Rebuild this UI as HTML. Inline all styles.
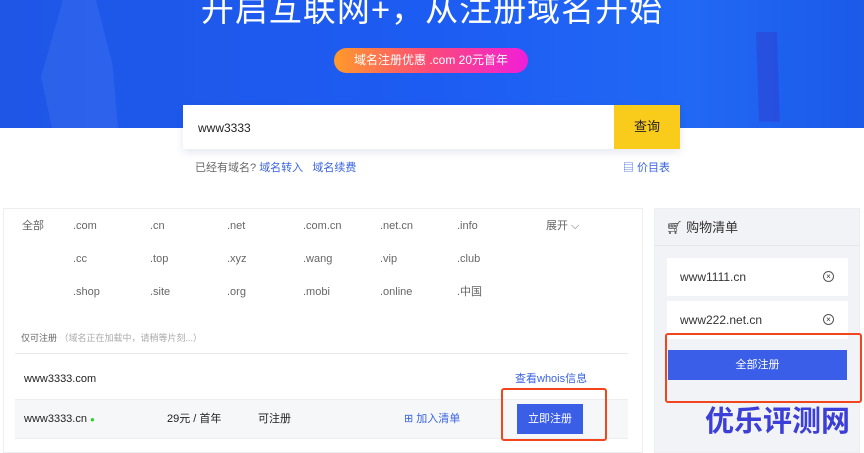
<!DOCTYPE html>
<html><head><meta charset="utf-8"><style>
*{margin:0;padding:0;box-sizing:border-box}
body{width:864px;height:449px;overflow:hidden;background:#fff;font-family:"Liberation Sans","Noto Sans CJK SC",sans-serif;position:relative;font-size:11px;color:#333}
.a{position:absolute;line-height:14px}
.ban{left:0;top:0;width:864px;height:128px;background:linear-gradient(90deg,#1f56e6 0%,#1d5cf2 50%,#2168f5 80%,#1c5ae8 100%)}
.t{left:0;width:864px;top:-10px;text-align:center;color:#fff;font-size:33px;line-height:40px;letter-spacing:1px}
.pill{left:334px;top:48px;width:194px;height:25px;border-radius:13px;background:linear-gradient(90deg,#ff9a2a,#fb4a7a 50%,#f01fd8);color:#fff;font-size:12px;text-align:center;line-height:25px}
.sb{left:183px;top:105px;width:497px;height:44px;background:#fff;box-shadow:0 3px 8px rgba(40,60,120,.12)}
.btn{left:614px;top:105px;width:66px;height:44px;background:#f9cb1a;font-size:13px;text-align:center;line-height:44px;color:#222}
.blue{color:#3a63e0}
.lp{left:3px;top:208px;width:640px;height:245px;border:1px solid #eceef2}
.rp{left:654px;top:208px;width:206px;height:245px;background:#f2f3f6;border:1px solid #eceef2}
.item{background:#fff;width:181px;height:38px;left:667px;font-size:12px;line-height:38px;padding-left:13px;color:#333}
.x{position:absolute;right:14px;top:13px;width:11px;height:11px;border:1px solid #555;border-radius:50%;font-size:8px;line-height:9px;text-align:center}
.tld{font-size:11px;color:#666}
.red{border:2px solid #f2441d;border-radius:3px}
</style></head><body>
<div class="a ban"></div>
<div class="a" style="left:30px;top:0;width:110px;height:128px;background:rgba(120,160,255,.15);clip-path:polygon(30% 0,60% 0,75% 50%,80% 100%,20% 100%,10% 60%)"></div>
<div class="a" style="left:735px;top:0;width:60px;height:128px;background:rgba(60,40,190,.3);clip-path:polygon(35% 25%,70% 25%,75% 95%,40% 95%)"></div>
<div class="a t">开启互联网+，从注册域名开始</div>
<div class="a pill">域名注册优惠 .com 20元首年</div>
<div class="a sb"></div>
<div class="a" style="left:198px;top:121px;font-size:12px;color:#222">www3333</div>
<div class="a btn">查询</div>
<div class="a" style="left:195px;top:161px;font-size:11px;color:#666">已经有域名? <span class="blue">域名转入</span>&nbsp;&nbsp; <span class="blue">域名续费</span></div>
<div class="a blue" style="left:623px;top:161px;font-size:11px">▤ 价目表</div>
<div class="a lp"></div>
<div class="a tld" style="left:22px;top:219px">全部</div>
<div class="a tld" style="left:73px;top:219px">.com</div><div class="a tld" style="left:150px;top:219px">.cn</div><div class="a tld" style="left:227px;top:219px">.net</div><div class="a tld" style="left:303px;top:219px">.com.cn</div><div class="a tld" style="left:380px;top:219px">.net.cn</div><div class="a tld" style="left:457px;top:219px">.info</div><div class="a tld" style="left:546px;top:219px">展开 ⌵</div>
<div class="a tld" style="left:73px;top:252px">.cc</div><div class="a tld" style="left:150px;top:252px">.top</div><div class="a tld" style="left:227px;top:252px">.xyz</div><div class="a tld" style="left:303px;top:252px">.wang</div><div class="a tld" style="left:380px;top:252px">.vip</div><div class="a tld" style="left:457px;top:252px">.club</div>
<div class="a tld" style="left:73px;top:285px">.shop</div><div class="a tld" style="left:150px;top:285px">.site</div><div class="a tld" style="left:227px;top:285px">.org</div><div class="a tld" style="left:303px;top:285px">.mobi</div><div class="a tld" style="left:380px;top:285px">.online</div><div class="a tld" style="left:457px;top:285px">.中国</div>
<div class="a" style="left:21px;top:331px;font-size:9px;color:#666">仅可注册 <span style="color:#aaa">（域名正在加载中，请稍等片刻...）</span></div>
<div class="a" style="left:15px;top:353px;width:613px;height:1px;background:#e8e9ed"></div>
<div class="a" style="left:24px;top:372px;font-size:11px;color:#222">www3333.com</div>
<div class="a blue" style="left:515px;top:372px;font-size:11px">查看whois信息</div>
<div class="a" style="left:15px;top:399px;width:613px;height:40px;background:#f6f7f9;border-top:1px solid #eceef2;border-bottom:1px solid #eceef2"></div>
<div class="a" style="left:24px;top:412px;font-size:11px;color:#222">www3333.cn <span style="color:#3c3;font-size:8px">●</span></div>
<div class="a" style="left:167px;top:412px;font-size:11px;color:#222">29元 / 首年</div>
<div class="a" style="left:258px;top:412px;font-size:11px;color:#222">可注册</div>
<div class="a blue" style="left:404px;top:412px;font-size:11px">⊞ 加入清单</div>
<div class="a" style="left:517px;top:404px;width:66px;height:30px;background:#3b5ee6;color:#fff;font-size:11px;text-align:center;line-height:30px">立即注册</div>
<div class="a red" style="left:501px;top:388px;width:106px;height:53px"></div>
<div class="a rp"></div>
<div class="a" style="left:655px;top:245px;width:204px;height:1px;background:#e4e6ea"></div>
<div class="a" style="left:666px;top:220px;font-size:13px;line-height:16px;color:#333">🛒︎ 购物清单</div>
<div class="a item" style="top:258px">www1111.cn<span class="x">×</span></div>
<div class="a item" style="top:301px">www222.net.cn<span class="x">×</span></div>
<div class="a" style="left:668px;top:350px;width:179px;height:30px;background:#3a5ee8;color:#fff;font-size:11px;text-align:center;line-height:30px">全部注册</div>
<div class="a red" style="left:665px;top:333px;width:197px;height:70px"></div>
<div class="a" style="left:705px;top:406px;font-size:29px;line-height:32px;font-weight:bold;color:#3b3fd8">优乐评测网</div>
</body></html>
